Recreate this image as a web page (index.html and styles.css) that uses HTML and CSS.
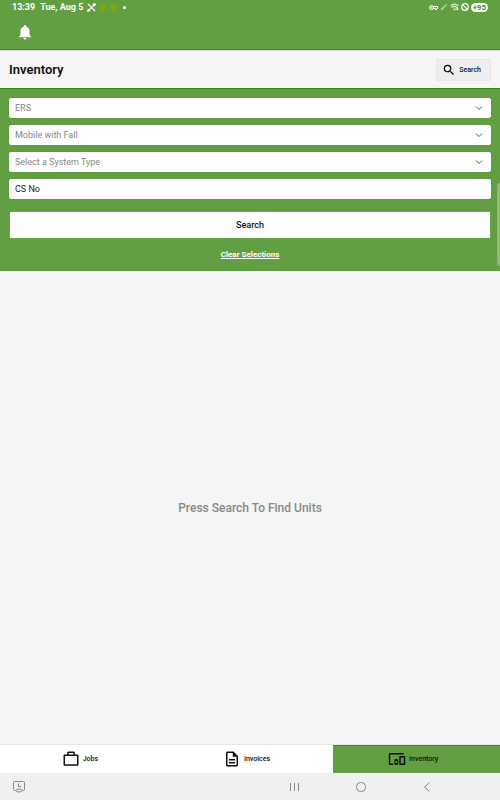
FILE: index.html
```html
<!DOCTYPE html>
<html lang="en">
<head>
<meta charset="utf-8">
<meta name="viewport" content="width=device-width, initial-scale=1">
<title>Inventory</title>
<link rel="stylesheet" href="styles.css">
</head>
<body>
<div class="status">
  <span>13:39</span>
  <span class="date">Tue, Aug 5</span>
  <svg class="pen" viewBox="0 0 10 10"><path d="M1 1l8 8M1 9l8-8" stroke="#fff" stroke-width="1.3"/><path d="M0 10l1-4 3 3zM6 1l3-1 1 2-2 2z" fill="#fff"/></svg>
  <svg class="robot" viewBox="0 0 10 10"><path d="M2 4a3 3 0 0 1 6 0h2v3H8v1H7v2H5.500V8h-1v2H3V8H2V7H0V4zM2 0l1.500 2M8 0L6.500 2" fill="#7aaa12" stroke="#7aaa12" stroke-width=".6"/></svg>
  <svg class="robot" viewBox="0 0 10 10"><path d="M2 4a3 3 0 0 1 6 0h2v3H8v1H7v2H5.500V8h-1v2H3V8H2V7H0V4zM2 0l1.500 2M8 0L6.500 2" fill="#7aaa12" stroke="#7aaa12" stroke-width=".6"/></svg>
  <i class="dot"></i>
  <div class="signals">
    <svg class="key" viewBox="0 0 18 12" fill="none" stroke="#fff" stroke-width="2"><circle cx="5" cy="6" r="4"/><path d="M9 4h8v4h-2v2h-3V8H9"/><circle cx="5" cy="6" r="1"/></svg>
    <svg class="small" viewBox="0 0 12 12"><path d="M1 11l1-3 8-7 1 1-7 8z" fill="#b5d3a1"/></svg>
    <svg class="wifi" viewBox="0 0 16 12" fill="none" stroke="#e3efdc" stroke-width="2"><path d="M1 4q7-6 14 0M3 7q5-4 9 0M6 9l2 2 2-2M13 6v5M11 9l2 2 2-2"/></svg>
    <svg class="small" viewBox="0 0 12 12" fill="none" stroke="#fff" stroke-width="1.700"><circle cx="6" cy="6" r="5"/><path d="M2.500 2.500l7 7"/></svg>
    <span class="battery"><svg viewBox="0 0 6 10"><path d="M4 0L0 6h2.500L2 10l4-6H3.500z" fill="#629f43"/></svg>95</span>
  </div>
</div>
<header class="toolbar">
  <button class="bell" aria-label="Notifications"><svg class="icon" viewBox="0 0 24 24"><path d="M12 22c1.100 0 2-.9 2-2h-4c0 1.100.89 2 2 2zm6-6v-5c0-3.070-1.640-5.640-4.500-6.320V4c0-.83-.67-1.500-1.500-1.500s-1.500.67-1.500 1.500v.68C7.630 5.360 6 7.920 6 11v5l-2 2v1h16v-1l-2-2z"/></svg></button>
</header>
<div class="heading">
  <h1>Inventory</h1>
  <button class="open-search"><svg viewBox="0 0 24 24"><path d="M15.500 14h-.79l-.28-.27A6.471 6.471 0 0 0 16 9.500 6.500 6.500 0 1 0 9.500 16c1.610 0 3.090-.59 4.230-1.570l.27.28v.79l5 4.990L20.490 19l-4.990-5zm-6 0C7.010 14 5 11.990 5 9.500S7.010 5 9.500 5 14 7.010 14 9.500 11.990 14 9.500 14z"/></svg>Search</button>
</div>
<form class="filters">
  <div class="field"><select aria-label="Category"><option>ERS</option></select><svg viewBox="0 0 8 8"><path d="M1 2.500l3 3 3-3"/></svg></div>
  <div class="field"><select aria-label="Unit type"><option>Mobile with Fall</option></select><svg viewBox="0 0 8 8"><path d="M1 2.500l3 3 3-3"/></svg></div>
  <div class="field"><select aria-label="System type"><option>Select a System Type</option></select><svg viewBox="0 0 8 8"><path d="M1 2.500l3 3 3-3"/></svg></div>
  <div class="field"><input type="text" aria-label="CS No" placeholder="CS No"></div>
  <button class="submit" type="button">Search</button>
  <a class="clear" href="#">Clear Selections</a>
</form>
<main class="results"><p>Press Search To Find Units</p></main>
<nav class="tabs">
  <a href="#"><svg class="icon" viewBox="0 0 24 24"><path d="M15 6V4H9v2h6zM4 8v11h16V8H4zm17-2l1 1v13l-1 1H3l-1-1V7l1-1h4V3l1-1h8l1 1v3h4z"/></svg>Jobs</a>
  <a href="#"><svg class="icon" viewBox="0 0 24 24"><path d="M8 16h8v2H8zm0-4h8v2H8zm6-10H6c-1.100 0-2 .9-2 2v16c0 1.100.89 2 1.990 2H18c1.100 0 2-.9 2-2V8l-6-6zm4 18H6V4h7v5h5v11z"/></svg>Invoices</a>
  <a class="active" href="#" aria-current="page"><svg class="icon" viewBox="0 0 24 24"><path d="M3 6h18V4H3c-1.100 0-2 .9-2 2v12c0 1.100.9 2 2 2h4v-2H3V6zm10 6H9v1.780c-.61.55-1 1.330-1 2.220s.39 1.670 1 2.220V20h4v-1.780c.61-.55 1-1.340 1-2.220s-.39-1.670-1-2.220V12zm-2 5.500c-.83 0-1.500-.67-1.500-1.500s.67-1.500 1.500-1.500 1.500.67 1.500 1.500-.67 1.500-1.500 1.500zM22 8h-6c-.5 0-1 .5-1 1v10c0 .5.5 1 1 1h6c.5 0 1-.5 1-1V9c0-.5-.5-1-1-1zm-1 10h-4v-8h4v8z"/></svg>Inventory</a>
</nav>
<div class="system">
  <button aria-label="Screen timer"><svg viewBox="0 0 14 14"><path d="M4 10.500H2.500a1 1 0 0 1-1-1v-7a1 1 0 0 1 1-1h9a1 1 0 0 1 1 1v7a1 1 0 0 1-1 1H10M6.500 3.500v3H9"/><ellipse cx="7" cy="10.500" rx="3" ry="1.500"/></svg></button>
  <div class="keys">
    <button aria-label="Recent apps"><svg viewBox="0 0 14 14"><path d="M2.500 3v8M6.500 3v8M10.500 3v8"/></svg></button>
    <button aria-label="Home"><svg viewBox="0 0 14 14"><rect x="2.500" y="2.500" width="9" height="9" rx="4"/></svg></button>
    <button aria-label="Back"><svg viewBox="0 0 14 14"><path d="M9.500 2.500L4.500 7l5 4.500"/></svg></button>
  </div>
</div>
<div class="edge-handle"></div>
</body>
</html>
```
FILE: styles.css
```css
* { box-sizing: border-box; }

body {
  position: relative;
  display: flex;
  flex-direction: column;
  min-height: 100vh;
  margin: 0;
  background: #f5f5f5;
  color: #111;
  font-family: Roboto, "Liberation Sans", sans-serif;
}

button, select, input { margin: 0; border: 0; font-family: inherit; }
button { padding: 0; background: none; color: inherit; }
svg { display: block; flex: none; }
.icon { width: 18px; height: 18px; fill: currentColor; }

.status {
  display: flex;
  align-items: center;
  height: 14px;
  padding: 0 12px;
  background: #629f43;
  color: #fff;
  font-size: 9px;
  font-weight: 700;
}
.date { margin: 0 4px 0 5px; }
.pen { width: 9px; height: 9px; }
.robot { width: 8px; height: 8px; margin-left: 3px; }
.dot { width: 3px; height: 3px; margin-left: 5px; border-radius: 50%; background: #fff; }
.signals { display: flex; align-items: center; gap: 2px; margin-left: auto; }
.key { width: 9px; height: 7px; }
.small { width: 8px; height: 8px; }
.wifi { width: 9px; height: 8px; }
.battery {
  display: flex;
  align-items: center;
  height: 9px;
  padding: 0 2px;
  border-radius: 5px;
  background: #fff;
  color: #4d8b30;
  font-size: 8px;
}
.battery svg { width: 4px; height: 7px; }

.toolbar {
  height: 36px;
  padding: 9px 16px;
  border-bottom: 1px solid #468d22;
  background: #629f43;
}
.bell { color: #fff; }

.heading {
  display: flex;
  align-items: center;
  justify-content: space-between;
  height: 39px;
  padding: 0 9px;
  border-top: 1px solid #d5dccf;
  border-bottom: 1px solid #278d08;
}
h1 { margin: 0; font-size: 13px; font-weight: 600; }
.open-search {
  display: flex;
  align-items: center;
  gap: 3px;
  height: 22px;
  padding: 0 9px 0 5px;
  border: 1px solid #e5e5e5;
  border-radius: 2px;
  background: #eee;
  font-size: 7px;
  font-weight: 500;
}
.open-search svg { width: 14px; height: 14px; }

.filters {
  display: flex;
  flex-direction: column;
  gap: 7px;
  padding: 9px 9px 11px;
  background: #629f43;
}
.field {
  display: flex;
  align-items: center;
  height: 20px;
  padding-right: 8px;
  border-radius: 2px;
  background: #fff;
  box-shadow: 0 0 1px #4b6e3a;
}
.field select, .field input {
  flex: 1;
  min-width: 0;
  height: 20px;
  padding: 0 6px;
  background: transparent;
  color: #858585;
  font-size: 9px;
  appearance: none;
}
.field input::placeholder { color: #222; opacity: 1; }
.field svg { width: 8px; height: 8px; fill: none; stroke: #555; }
.submit {
  height: 26px;
  margin: 6px 1px 0;
  border-radius: 1px;
  background: #fff;
  box-shadow: 0 0 1px #d5e5cc;
  font-size: 9px;
  font-weight: 500;
}
.clear {
  align-self: center;
  margin-top: 4px;
  color: #fff;
  font-size: 8px;
  font-weight: 700;
  line-height: 11px;
}

.results {
  display: flex;
  flex: 1;
  align-items: center;
  justify-content: center;
}
.results p { margin: 0; color: #888; font-size: 12px; font-weight: 500; }

.tabs {
  display: grid;
  grid-template-columns: repeat(3, 1fr);
  height: 29px;
  border-top: 1px solid #e6e6e6;
  background: #fff;
}
.tabs a {
  display: flex;
  align-items: center;
  justify-content: center;
  gap: 3px;
  padding-right: 7px;
  color: #111;
  font-size: 7px;
  font-weight: 500;
  text-decoration: none;
}
.tabs .active { background: #629f43; box-shadow: inset 0 1px #3f8d16; }

.system {
  display: flex;
  align-items: center;
  justify-content: space-between;
  height: 27px;
  padding: 0 66px 0 12px;
  background: #f0f0f2;
}
.keys { display: flex; gap: 52px; }
.system svg { width: 14px; height: 14px; fill: none; stroke: #888; }

.edge-handle {
  position: absolute;
  top: 183px;
  right: 0;
  width: 3px;
  height: 83px;
  border-radius: 3px 0 0 3px;
  background: #8fba78;
}
```
